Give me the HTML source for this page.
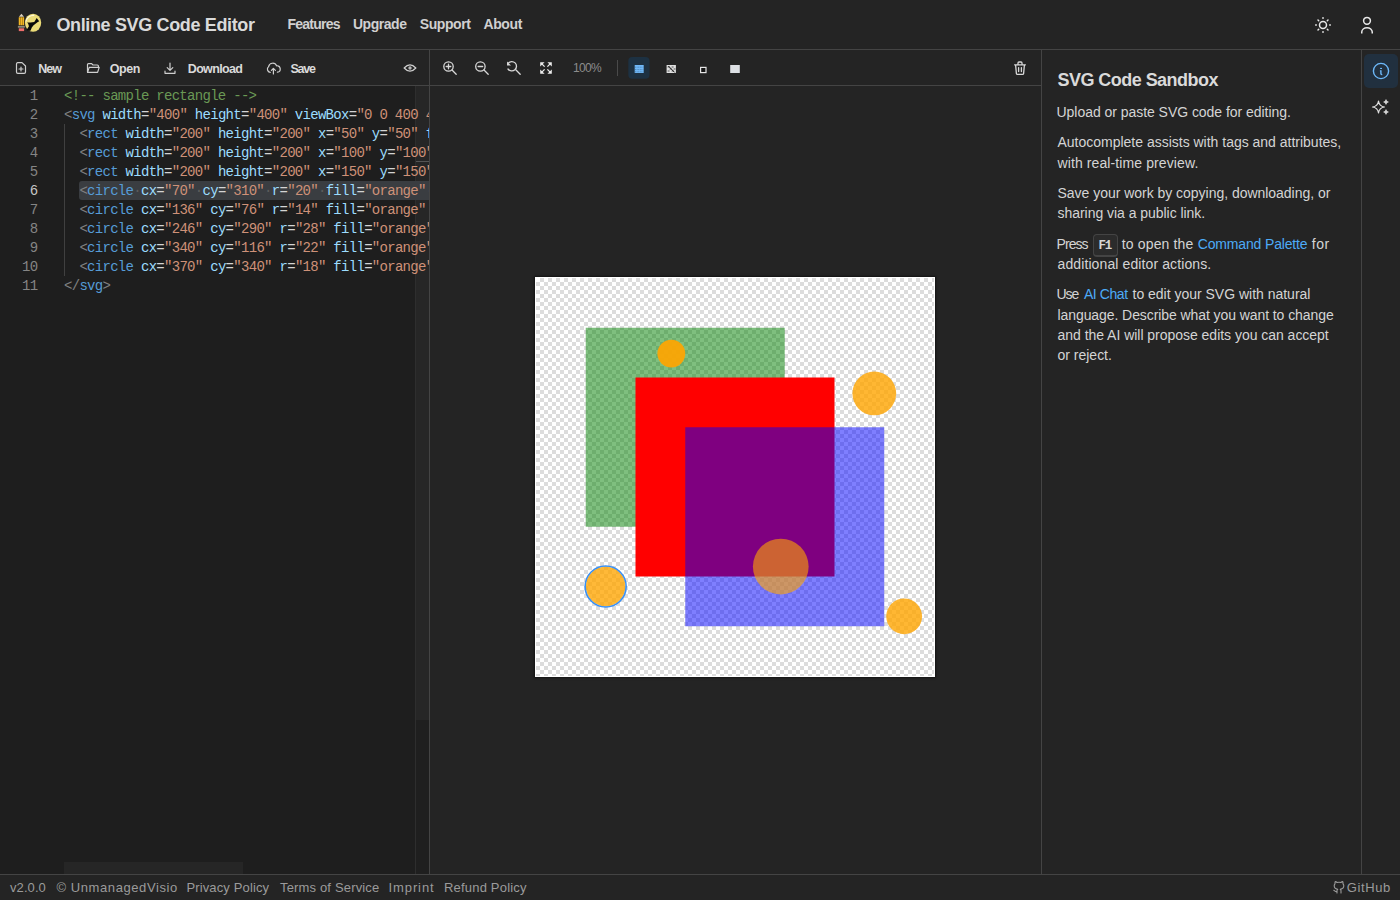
<!DOCTYPE html>
<html><head><meta charset="utf-8">
<style>
*{box-sizing:border-box;margin:0;padding:0}
html,body{width:1400px;height:900px;overflow:hidden;background:#242424;font-family:"Liberation Sans",sans-serif;color:#d4d4d4}
.abs{position:absolute}
.tx{position:absolute;white-space:nowrap;line-height:1}
.hl{position:absolute;height:1px;background:#444}
.vl{position:absolute;width:1px;background:#444}
svg{display:block}
#ed{position:absolute;left:0;top:86px;width:429px;height:788px;overflow:hidden;background:#1e1e1e}
.cl{position:absolute;left:64px;height:19px;line-height:19px;font-family:"Liberation Mono",monospace;font-size:14px;letter-spacing:-0.71px;white-space:pre;color:#d4d4d4}
.lnum{position:absolute;left:0;width:37.5px;text-align:right;height:19px;line-height:19px;font-family:"Liberation Mono",monospace;font-size:14px;letter-spacing:-0.71px;color:#858585}
.lnum.act{color:#c6c6c6}
.pu{color:#808080}.tg{color:#569cd6}.at{color:#9cdcfe}.st{color:#ce9178}.cm{color:#6a9955}.eq{color:#d4d4d4}
.ws{color:#5c5c5c}
</style></head><body>

<!-- ===== header ===== -->
<svg class="abs" style="left:16px;top:12px" width="28" height="22" viewBox="16 12 28 22">
  <polygon points="18.9,16.7 21.45,13.7 24,16.7" fill="#ddd3bd"/>
  <rect x="18.8" y="17.3" width="5.3" height="7.9" fill="#7a5a10"/>
  <rect x="18.8" y="17.3" width="1.55" height="7.9" fill="#f2b625"/>
  <rect x="20.7" y="17.3" width="1.5" height="7.9" fill="#f2b625"/>
  <rect x="22.55" y="17.3" width="1.55" height="7.9" fill="#f2b625"/>
  <rect x="17.9" y="25.9" width="6.9" height="1.8" fill="#8f897b"/>
  <rect x="18.8" y="28.3" width="5.3" height="2.8" fill="#ee6d6a"/>
  <ellipse cx="33.05" cy="22.75" rx="8.15" ry="9.1" fill="#ecdc78"/>
  <path d="M25.7,21.6 A8,8.8 0 0 1 34.2,15.4" stroke="#fffbe6" stroke-width="1.2" fill="none" opacity="0.9"/>
  <path d="M36.67,18.07 L39.2,21.27 L37.47,22.2 L33.6,25.2 L31.8,27.4 L30.9,29.8 L30.2,31 L27.87,30.4 L26.53,29.93 L28.93,26.2 L28.2,23.8 L27.1,22.4 L30.53,22.5 L34.27,22.0 L35.33,20.2 Z" fill="#0a0a0a"/>
</svg>
<!-- sun -->
<svg class="abs" style="left:1313px;top:15px" width="20" height="20" viewBox="0 0 20 20">
  <circle cx="10" cy="10" r="3.5" fill="none" stroke="#e8e8e8" stroke-width="1.5"/>
  <g fill="#e8e8e8">
    <rect x="9.2" y="2.2" width="1.6" height="1.6"/><rect x="9.2" y="16.2" width="1.6" height="1.6"/>
    <rect x="2.2" y="9.2" width="1.6" height="1.6"/><rect x="16.2" y="9.2" width="1.6" height="1.6"/>
  </g>
  <g stroke="#e8e8e8" stroke-width="1.5" stroke-linecap="round">
    <line x1="5" y1="5" x2="5.7" y2="5.7"/><line x1="15" y1="5" x2="14.3" y2="5.7"/>
    <line x1="5" y1="15" x2="5.7" y2="14.3"/><line x1="15" y1="15" x2="14.3" y2="14.3"/>
  </g>
</svg>
<!-- user -->
<svg class="abs" style="left:1357px;top:14px" width="20" height="20" viewBox="0 0 20 20">
  <circle cx="10" cy="6.8" r="3.4" fill="none" stroke="#e8e8e8" stroke-width="1.5"/>
  <path d="M4.75,19.6 V18 A5.25,4.3 0 0 1 15.25,18 V19.6" fill="none" stroke="#e8e8e8" stroke-width="1.5"/>
</svg>
<div class="hl" style="left:0;top:49px;width:1400px"></div>

<!-- ===== left toolbar ===== -->
<svg class="abs" style="left:10px;top:58px" width="280" height="20" viewBox="10 58 280 20" fill="none" stroke="#cfcfcf" stroke-width="1.2" stroke-linejoin="round" stroke-linecap="round">
  <!-- new file -->
  <path d="M17.5,62.6 H22 L25.5,66 V72 A1.3,1.3 0 0 1 24.2,73.3 H17.8 A1.3,1.3 0 0 1 16.5,72 V63.9 A1.3,1.3 0 0 1 17.8,62.6 Z"/>
  <path d="M21,67 V71 M19,69 H23"/>
  <!-- folder open -->
  <path d="M87.5,71.8 V64.6 A1,1 0 0 1 88.5,63.6 H91.6 L93,65 H97.4 A1,1 0 0 1 98.4,66 V67"/>
  <path d="M87.5,72.4 L89.2,67.4 H99.2 L97.6,72.4 Z"/>
  <!-- download -->
  <path d="M170,63 V70 M167.2,67.6 L170,70.4 L172.8,67.6 M165,71 V73.3 H175 V71"/>
  <!-- cloud upload -->
  <path d="M270.2,72.4 A3.3,3.3 0 0 1 268.6,66.6 A4.2,4.2 0 0 1 276.6,65.8 A3.1,3.1 0 0 1 277.4,72.2"/>
  <path d="M273.4,74 V68.6 M271.4,70.4 L273.4,68.4 L275.4,70.4"/>
</svg>
<!-- eye -->
<svg class="abs" style="left:402px;top:60px" width="16" height="16" viewBox="0 0 16 16">
  <path d="M2.2,8 Q8,1.6 13.8,8 Q8,14.4 2.2,8 Z" fill="none" stroke="#d0d0d0" stroke-width="1.2"/>
  <circle cx="8" cy="8" r="1.7" fill="#b8b8b8"/>
</svg>
<div class="hl" style="left:0;top:85px;width:1041px"></div>

<!-- ===== editor ===== -->
<div id="ed">
  <div class="abs" style="left:415px;top:0;width:14px;height:788px;background:#1f1f1f;border-left:1px solid #2e2e2e"></div>
  <div class="abs" style="left:416px;top:0;width:13px;height:634px;background:#262626"></div>
  <div class="abs" style="left:416px;top:75px;width:13px;height:1px;background:#555"></div>
  <div class="abs" style="left:64px;top:776px;width:179px;height:12px;background:#262626"></div>
  <div class="abs" style="left:79px;top:95px;width:360px;height:19px;background:#3a3d41;border-radius:3px"></div>
  <div class="abs" style="left:64px;top:38px;width:1px;height:152px;background:#404040"></div>
</div>
<div class="abs" style="left:0;top:0;width:429px;height:900px;overflow:hidden;pointer-events:none">
<div class="lnum" style="top:87px">1</div>
<div class="cl" style="top:87px"><span class="cm">&lt;!-- sample rectangle --&gt;</span></div>
<div class="lnum" style="top:106px">2</div>
<div class="cl" style="top:106px"><span class="pu">&lt;</span><span class="tg">svg</span> <span class="at">width</span><span class="eq">=</span><span class="st">"400"</span> <span class="at">height</span><span class="eq">=</span><span class="st">"400"</span> <span class="at">viewBox</span><span class="eq">=</span><span class="st">"0 0 400 400"</span><span class="pu">&gt;</span></div>
<div class="lnum" style="top:125px">3</div>
<div class="cl" style="top:125px">  <span class="pu">&lt;</span><span class="tg">rect</span> <span class="at">width</span><span class="eq">=</span><span class="st">"200"</span> <span class="at">height</span><span class="eq">=</span><span class="st">"200"</span> <span class="at">x</span><span class="eq">=</span><span class="st">"50"</span> <span class="at">y</span><span class="eq">=</span><span class="st">"50"</span> <span class="at">fill</span><span class="eq">=</span><span class="st">"green"</span> <span class="at">opacity</span><span class="eq">=</span><span class="st">"0.5"</span><span class="pu"> /&gt;</span></div>
<div class="lnum" style="top:144px">4</div>
<div class="cl" style="top:144px">  <span class="pu">&lt;</span><span class="tg">rect</span> <span class="at">width</span><span class="eq">=</span><span class="st">"200"</span> <span class="at">height</span><span class="eq">=</span><span class="st">"200"</span> <span class="at">x</span><span class="eq">=</span><span class="st">"100"</span> <span class="at">y</span><span class="eq">=</span><span class="st">"100"</span> <span class="at">fill</span><span class="eq">=</span><span class="st">"red"</span><span class="pu"> /&gt;</span></div>
<div class="lnum" style="top:163px">5</div>
<div class="cl" style="top:163px">  <span class="pu">&lt;</span><span class="tg">rect</span> <span class="at">width</span><span class="eq">=</span><span class="st">"200"</span> <span class="at">height</span><span class="eq">=</span><span class="st">"200"</span> <span class="at">x</span><span class="eq">=</span><span class="st">"150"</span> <span class="at">y</span><span class="eq">=</span><span class="st">"150"</span> <span class="at">fill</span><span class="eq">=</span><span class="st">"blue"</span> <span class="at">opacity</span><span class="eq">=</span><span class="st">"0.5"</span><span class="pu"> /&gt;</span></div>
<div class="lnum act" style="top:182px">6</div>
<div class="cl" style="top:182px">  <span class="pu">&lt;</span><span class="tg">circle</span><span class="ws">·</span><span class="at">cx</span><span class="eq">=</span><span class="st">"70"</span><span class="ws">·</span><span class="at">cy</span><span class="eq">=</span><span class="st">"310"</span><span class="ws">·</span><span class="at">r</span><span class="eq">=</span><span class="st">"20"</span><span class="ws">·</span><span class="at">fill</span><span class="eq">=</span><span class="st">"orange"</span><span class="ws">·</span><span class="at">opacity</span><span class="eq">=</span><span class="st">"0.8"</span><span class="pu"> /&gt;</span></div>
<div class="lnum" style="top:201px">7</div>
<div class="cl" style="top:201px">  <span class="pu">&lt;</span><span class="tg">circle</span> <span class="at">cx</span><span class="eq">=</span><span class="st">"136"</span> <span class="at">cy</span><span class="eq">=</span><span class="st">"76"</span> <span class="at">r</span><span class="eq">=</span><span class="st">"14"</span> <span class="at">fill</span><span class="eq">=</span><span class="st">"orange"</span> <span class="at">opacity</span><span class="eq">=</span><span class="st">"0.8"</span><span class="pu"> /&gt;</span></div>
<div class="lnum" style="top:220px">8</div>
<div class="cl" style="top:220px">  <span class="pu">&lt;</span><span class="tg">circle</span> <span class="at">cx</span><span class="eq">=</span><span class="st">"246"</span> <span class="at">cy</span><span class="eq">=</span><span class="st">"290"</span> <span class="at">r</span><span class="eq">=</span><span class="st">"28"</span> <span class="at">fill</span><span class="eq">=</span><span class="st">"orange"</span> <span class="at">opacity</span><span class="eq">=</span><span class="st">"0.8"</span><span class="pu"> /&gt;</span></div>
<div class="lnum" style="top:239px">9</div>
<div class="cl" style="top:239px">  <span class="pu">&lt;</span><span class="tg">circle</span> <span class="at">cx</span><span class="eq">=</span><span class="st">"340"</span> <span class="at">cy</span><span class="eq">=</span><span class="st">"116"</span> <span class="at">r</span><span class="eq">=</span><span class="st">"22"</span> <span class="at">fill</span><span class="eq">=</span><span class="st">"orange"</span> <span class="at">opacity</span><span class="eq">=</span><span class="st">"0.8"</span><span class="pu"> /&gt;</span></div>
<div class="lnum" style="top:258px">10</div>
<div class="cl" style="top:258px">  <span class="pu">&lt;</span><span class="tg">circle</span> <span class="at">cx</span><span class="eq">=</span><span class="st">"370"</span> <span class="at">cy</span><span class="eq">=</span><span class="st">"340"</span> <span class="at">r</span><span class="eq">=</span><span class="st">"18"</span> <span class="at">fill</span><span class="eq">=</span><span class="st">"orange"</span> <span class="at">opacity</span><span class="eq">=</span><span class="st">"0.8"</span><span class="pu"> /&gt;</span></div>
<div class="lnum" style="top:277px">11</div>
<div class="cl" style="top:277px"><span class="pu">&lt;/</span><span class="tg">svg</span><span class="pu">&gt;</span></div>
</div>

<!-- ===== preview toolbar ===== -->
<svg class="abs" style="left:436px;top:56px" width="600" height="24" viewBox="436 56 600 24">
  <g fill="none" stroke="#d8d8d8" stroke-width="1.3" stroke-linecap="round">
    <circle cx="448.5" cy="66.5" r="4.7"/><path d="M452,70 L456.2,74.2 M448.5,64.2 V68.8 M446.2,66.5 H450.8"/>
    <circle cx="480.4" cy="66.5" r="4.7"/><path d="M484,70 L488.2,74.2 M478.1,66.5 H482.7"/>
    <path d="M508.2,63.2 A4.7,4.7 0 1 1 508,69"/><path d="M516,70 L520.2,74.2"/>
  </g>
  <path d="M507,61.4 L507,65.4 L511,65.4 Z" fill="#d8d8d8"/>
  <g fill="none" stroke="#ececec" stroke-width="1.3" stroke-linecap="butt">
    <path d="M541.6,63.6 L544.6,66.6 M550.4,63.6 L547.4,66.6 M541.6,72.4 L544.6,69.4 M550.4,72.4 L547.4,69.4"/>
  </g>
  <g fill="#ececec">
    <path d="M540.2,62.2 H544.6 L540.2,66.6 Z M551.8,62.2 H547.4 L551.8,66.6 Z M540.2,73.8 H544.6 L540.2,69.4 Z M551.8,73.8 H547.4 L551.8,69.4 Z"/>
  </g>
  <rect x="617" y="60" width="1" height="16" fill="#4a4a4a"/>
  <rect x="628.3" y="57" width="21.2" height="21.7" rx="4" fill="#1d3142"/>
  <rect x="634.7" y="65" width="9" height="8" fill="#70b8f8"/>
  <g stroke="#3a6a90" stroke-width="0.6" stroke-dasharray="1,0.6"><path d="M635,67.2 H643.4 M635,69.6 H643.4 M635,71.8 H643.4"/></g>
  <rect x="666.6" y="65" width="9.3" height="8" fill="#e0e0e0"/>
  <g fill="#9a9a9a"><rect x="667.6" y="66" width="2" height="2"/><rect x="671.6" y="66" width="2" height="2"/><rect x="669.6" y="68" width="2" height="2"/><rect x="673.6" y="68" width="2" height="2"/><rect x="667.6" y="70" width="2" height="2"/><rect x="671.6" y="70" width="2" height="2"/></g>
  <path d="M668.4,66 L674.6,72.4" stroke="#111" stroke-width="1"/>
  <rect x="700.6" y="67.4" width="5.4" height="5.2" fill="#151515" stroke="#e6e6e6" stroke-width="1.2"/>
  <rect x="730.2" y="65" width="9.6" height="8" fill="#dde0e4"/>
  <!-- trash -->
  <g fill="none" stroke="#d8d8d8" stroke-width="1.3" stroke-linecap="round" stroke-linejoin="round">
    <path d="M1014.6,64.8 H1025.4 M1015.6,65 L1016.4,73.6 A1,1 0 0 0 1017.4,74.4 H1022.6 A1,1 0 0 0 1023.6,73.6 L1024.4,65"/>
    <path d="M1018,64.6 V63 A1,1 0 0 1 1019,62 H1021 A1,1 0 0 1 1022,63 V64.6 M1018.6,67.6 V71.6 M1021.4,67.6 V71.6"/>
  </g>
</svg>
<div class="vl" style="left:429px;top:50px;height:824px"></div>

<!-- ===== preview canvas ===== -->
<div class="abs" style="left:535px;top:277px;width:400px;height:400px;background:#fff;box-shadow:0 0 2px 1px rgba(0,0,0,.5)"></div>
<div class="abs" style="left:536px;top:278px;width:398px;height:398px;background-color:#fff;background-image:linear-gradient(45deg,#dcdcdc 25%,transparent 25%,transparent 75%,#dcdcdc 75%),linear-gradient(45deg,#dcdcdc 25%,transparent 25%,transparent 75%,#dcdcdc 75%);background-size:8px 8px;background-position:0 0,4px 4px">
<svg width="398" height="398" viewBox="0 0 400 400">
  <rect width="200" height="200" x="50" y="50" fill="green" opacity="0.5"/>
  <rect width="200" height="200" x="100" y="100" fill="red"/>
  <rect width="200" height="200" x="150" y="150" fill="blue" opacity="0.5"/>
  <circle cx="70" cy="310" r="20" fill="orange" opacity="0.78"/>
  <circle cx="70" cy="310" r="20.6" fill="none" stroke="#3a90f4" stroke-width="1.6"/>
  <circle cx="136" cy="76" r="14" fill="orange" opacity="0.92"/>
  <circle cx="246" cy="290" r="28" fill="orange" opacity="0.6"/>
  <circle cx="340" cy="116" r="22" fill="orange" opacity="0.8"/>
  <circle cx="370" cy="340" r="18" fill="orange" opacity="0.8"/>
</svg>
</div>
<div class="vl" style="left:1041px;top:50px;height:824px"></div>

<!-- ===== sidebar ===== -->
<div class="abs" style="left:1092.9px;top:234.3px;width:25.2px;height:22.5px;background:#2b2b2b;border:1px solid #444;border-bottom-width:2px;border-radius:4px"></div>
<div class="tx" style="left:1098.5px;top:239.6px;font-size:12.5px;font-weight:700;color:#d6d6d6;font-family:'Liberation Mono',monospace;letter-spacing:-1.2px">F1</div>
<div class="vl" style="left:1361px;top:50px;height:824px"></div>
<div class="abs" style="left:1364px;top:54px;width:34px;height:34px;background:#21303f;border-radius:5px"></div>
<svg class="abs" style="left:1371px;top:61px" width="20" height="20" viewBox="0 0 20 20">
  <circle cx="10" cy="10" r="7.6" fill="none" stroke="#6db8f8" stroke-width="1.4"/>
  <rect x="9.1" y="6.9" width="1.9" height="1.1" fill="#6db8f8"/>
  <path d="M8.9,9.9 H9.9 V12.6 Q10,13.6 11.3,13.6" fill="none" stroke="#6db8f8" stroke-width="1.4"/>
</svg>
<svg class="abs" style="left:1370px;top:96px" width="22" height="22" viewBox="0 0 22 22">
  <path d="M8.5,5 Q9.2,10.3 14.5,11 Q9.2,11.7 8.5,17 Q7.8,11.7 2.5,11 Q7.8,10.3 8.5,5 Z" fill="none" stroke="#e0e0e0" stroke-width="1.2" stroke-linejoin="round"/>
  <path d="M16,3.6 Q16.3,5.7 18.4,6 Q16.3,6.3 16,8.4 Q15.7,6.3 13.6,6 Q15.7,5.7 16,3.6 Z" fill="#e0e0e0" stroke="#e0e0e0" stroke-width="0.6"/>
  <path d="M16,13.6 Q16.3,15.7 18.4,16 Q16.3,16.3 16,18.4 Q15.7,16.3 13.6,16 Q15.7,15.7 16,13.6 Z" fill="#e0e0e0" stroke="#e0e0e0" stroke-width="0.6"/>
</svg>

<!-- ===== footer ===== -->
<div class="hl" style="left:0;top:874px;width:1400px"></div>
<svg class="abs" style="left:1332px;top:880px" width="14" height="14" viewBox="0 0 14 14">
  <path d="M5,13 V10.8 C5,10 5.3,9.6 5.7,9.3 C3.6,9 2.2,8 2.2,5.8 C2.2,5 2.5,4.3 3,3.8 C2.9,3.3 2.9,2.5 3.2,1.6 C3.9,1.6 4.6,2 5.2,2.5 C6.3,2.2 7.7,2.2 8.8,2.5 C9.4,2 10.1,1.6 10.8,1.6 C11.1,2.5 11.1,3.3 11,3.8 C11.5,4.3 11.8,5 11.8,5.8 C11.8,8 10.4,9 8.3,9.3 C8.7,9.6 9,10.1 9,10.8 V13 M5,11.6 C3.2,12 2.8,10.6 1.8,10.2" fill="none" stroke="#9b9b9b" stroke-width="1.1" stroke-linecap="round" stroke-linejoin="round"/>
</svg>

<div class="tx" style="left:56.40px;top:16.46px;font-size:18px;font-weight:700;color:#dadada;letter-spacing:-0.353px">Online SVG Code Editor</div>
<div class="tx" style="left:287.40px;top:17.15px;font-size:14px;font-weight:700;color:#d0d0d0;letter-spacing:-0.739px">Features</div>
<div class="tx" style="left:352.90px;top:17.15px;font-size:14px;font-weight:700;color:#d0d0d0;letter-spacing:-0.450px">Upgrade</div>
<div class="tx" style="left:419.70px;top:17.15px;font-size:14px;font-weight:700;color:#d0d0d0;letter-spacing:-0.399px">Support</div>
<div class="tx" style="left:483.40px;top:17.15px;font-size:14px;font-weight:700;color:#d0d0d0;letter-spacing:-0.341px">About</div>
<div class="tx" style="left:38.20px;top:63.32px;font-size:12.5px;font-weight:700;color:#dadada;letter-spacing:-0.940px">New</div>
<div class="tx" style="left:109.70px;top:63.32px;font-size:12.5px;font-weight:700;color:#dadada;letter-spacing:-0.437px">Open</div>
<div class="tx" style="left:187.80px;top:63.32px;font-size:12.5px;font-weight:700;color:#dadada;letter-spacing:-0.669px">Download</div>
<div class="tx" style="left:290.40px;top:63.32px;font-size:12.5px;font-weight:700;color:#dadada;letter-spacing:-1.247px">Save</div>
<div class="tx" style="left:573.00px;top:61.74px;font-size:12px;font-weight:400;color:#8c8c8c;letter-spacing:-0.674px">100%</div>
<div class="tx" style="left:1057.50px;top:71.46px;font-size:18px;font-weight:700;color:#dadada;letter-spacing:-0.541px">SVG Code Sandbox</div>
<div class="tx" style="left:1056.50px;top:104.55px;font-size:14px;font-weight:400;color:#d4d4d4;letter-spacing:-0.039px">Upload or paste SVG code for editing.</div>
<div class="tx" style="left:1057.50px;top:134.85px;font-size:14px;font-weight:400;color:#d4d4d4;letter-spacing:-0.008px">Autocomplete assists with tags and attributes,</div>
<div class="tx" style="left:1057.50px;top:156.15px;font-size:14px;font-weight:400;color:#d4d4d4;letter-spacing:0.105px">with real-time preview.</div>
<div class="tx" style="left:1057.50px;top:185.85px;font-size:14px;font-weight:400;color:#d4d4d4;letter-spacing:-0.026px">Save your work by copying, downloading, or</div>
<div class="tx" style="left:1057.50px;top:206.15px;font-size:14px;font-weight:400;color:#d4d4d4;letter-spacing:-0.038px">sharing via a public link.</div>
<div class="tx" style="left:1056.50px;top:236.85px;font-size:14px;font-weight:400;color:#d4d4d4;letter-spacing:-0.922px">Press</div>
<div class="tx" style="left:1121.80px;top:236.85px;font-size:14px;font-weight:400;color:#d4d4d4;letter-spacing:0.142px">to open the</div>
<div class="tx" style="left:1197.80px;top:236.85px;font-size:14px;font-weight:400;color:#4dabf7;letter-spacing:-0.162px">Command Palette</div>
<div class="tx" style="left:1311.80px;top:236.85px;font-size:14px;font-weight:400;color:#d4d4d4;letter-spacing:0.562px">for</div>
<div class="tx" style="left:1057.50px;top:257.05px;font-size:14px;font-weight:400;color:#d4d4d4;letter-spacing:0.108px">additional editor actions.</div>
<div class="tx" style="left:1056.50px;top:287.15px;font-size:14px;font-weight:400;color:#d4d4d4;letter-spacing:-1.055px">Use</div>
<div class="tx" style="left:1083.90px;top:287.15px;font-size:14px;font-weight:400;color:#4dabf7;letter-spacing:-0.417px">AI Chat</div>
<div class="tx" style="left:1132.50px;top:287.15px;font-size:14px;font-weight:400;color:#d4d4d4;letter-spacing:-0.010px">to edit your SVG with natural</div>
<div class="tx" style="left:1057.50px;top:307.55px;font-size:14px;font-weight:400;color:#d4d4d4;letter-spacing:-0.079px">language. Describe what you want to change</div>
<div class="tx" style="left:1057.50px;top:327.85px;font-size:14px;font-weight:400;color:#d4d4d4;letter-spacing:-0.027px">and the AI will propose edits you can accept</div>
<div class="tx" style="left:1057.50px;top:348.15px;font-size:14px;font-weight:400;color:#d4d4d4;letter-spacing:-0.008px">or reject.</div>
<div class="tx" style="left:10.00px;top:880.60px;font-size:13px;font-weight:400;color:#9b9b9b;letter-spacing:0.083px">v2.0.0</div>
<div class="tx" style="left:56.40px;top:880.60px;font-size:13px;font-weight:400;color:#9b9b9b;letter-spacing:0.591px">© UnmanagedVisio</div>
<div class="tx" style="left:186.40px;top:880.60px;font-size:13px;font-weight:400;color:#9b9b9b;letter-spacing:0.138px">Privacy Policy</div>
<div class="tx" style="left:280.00px;top:880.60px;font-size:13px;font-weight:400;color:#9b9b9b;letter-spacing:0.162px">Terms of Service</div>
<div class="tx" style="left:388.60px;top:880.60px;font-size:13px;font-weight:400;color:#9b9b9b;letter-spacing:0.880px">Imprint</div>
<div class="tx" style="left:444.00px;top:880.60px;font-size:13px;font-weight:400;color:#9b9b9b;letter-spacing:0.191px">Refund Policy</div>
<div class="tx" style="left:1346.80px;top:880.80px;font-size:13px;font-weight:400;color:#9b9b9b;letter-spacing:0.594px">GitHub</div>
</body></html>
